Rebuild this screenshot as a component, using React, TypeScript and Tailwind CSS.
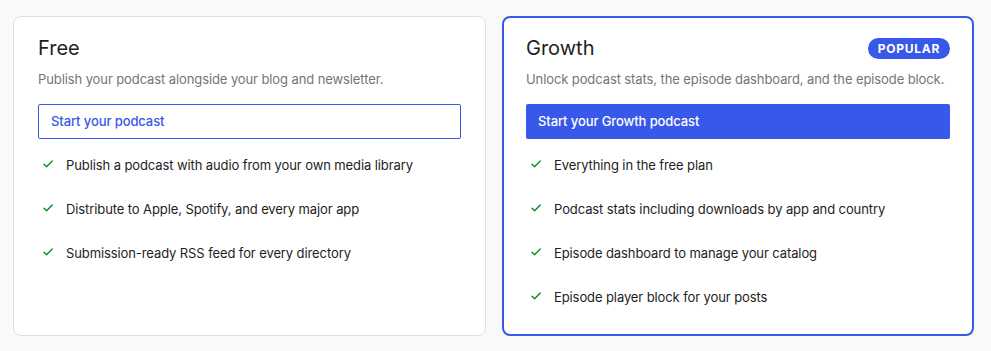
import React from "react";

const font = { fontFamily: "Inter, 'Liberation Sans', sans-serif" };

function Check() {
  return (
    <svg width="10" height="8" viewBox="0 0 10 8" className="mt-[5px] shrink-0" aria-hidden>
      <path d="M1 4.2 L3.6 6.8 L9.2 1" fill="none" stroke="#008a20" strokeWidth="1.3" strokeLinecap="round" strokeLinejoin="round" />
    </svg>
  );
}

function Feature({ text }: { text: string }) {
  return (
    <li className="flex items-start gap-[13px] pl-[5px] text-[13px] leading-[20px] tracking-[-0.1px] text-[#1e1e1e]">
      <Check />
      <span>{text}</span>
    </li>
  );
}

export default function App() {
  return (
    <div style={font} className="h-[351px] w-[991px] bg-[#f9f9f9] pl-[13px] pr-[17px] pt-4">
      <div className="grid h-[320px] grid-cols-[473px_472px] gap-4">
        <div className="rounded-lg border border-[#e0e0e0] bg-white px-6 pt-[19px]">
          <div className="flex h-[24px] items-center">
            <h2 className="text-[20px] leading-[24px] font-normal text-[#1e1e1e]">Free</h2>
          </div>
          <p className="mt-[9px] text-[13px] leading-[20px] tracking-[-0.1px] text-[#757575]">
            Publish your podcast alongside your blog and newsletter.
          </p>
          <button className="mt-[15px] flex h-[35px] w-full items-center rounded-[2px] border border-[#3858e9] bg-white px-3 text-left text-[13px] font-medium tracking-[-0.1px] text-[#3858e9]">
            Start your podcast
          </button>
          <ul className="mt-[16px] flex flex-col gap-[24px]">
            <Feature text="Publish a podcast with audio from your own media library" />
            <Feature text="Distribute to Apple, Spotify, and every major app" />
            <Feature text="Submission-ready RSS feed for every directory" />
          </ul>
        </div>
        <div className="rounded-lg border-2 border-[#3858e9] bg-white px-[22px] pt-[18px]">
          <div className="flex h-[24px] items-center justify-between">
            <h2 className="text-[20px] leading-[24px] font-normal text-[#1e1e1e]">Growth</h2>
            <span className="rounded-full bg-[#3858e9] px-[10px] py-[3px] text-[12px] leading-[15px] font-bold tracking-[0.06em] text-white">
              POPULAR
            </span>
          </div>
          <p className="mt-[9px] text-[13px] leading-[20px] tracking-[-0.1px] whitespace-nowrap text-[#757575]">
            Unlock podcast stats, the episode dashboard, and the episode block.
          </p>
          <button className="mt-[15px] flex h-[35px] w-full items-center rounded-[2px] bg-[#3858e9] px-3 text-left text-[13px] font-medium tracking-[-0.1px] text-white">
            Start your Growth podcast
          </button>
          <ul className="mt-[16px] flex flex-col gap-[24px]">
            <Feature text="Everything in the free plan" />
            <Feature text="Podcast stats including downloads by app and country" />
            <Feature text="Episode dashboard to manage your catalog" />
            <Feature text="Episode player block for your posts" />
          </ul>
        </div>
      </div>
    </div>
  );
}
